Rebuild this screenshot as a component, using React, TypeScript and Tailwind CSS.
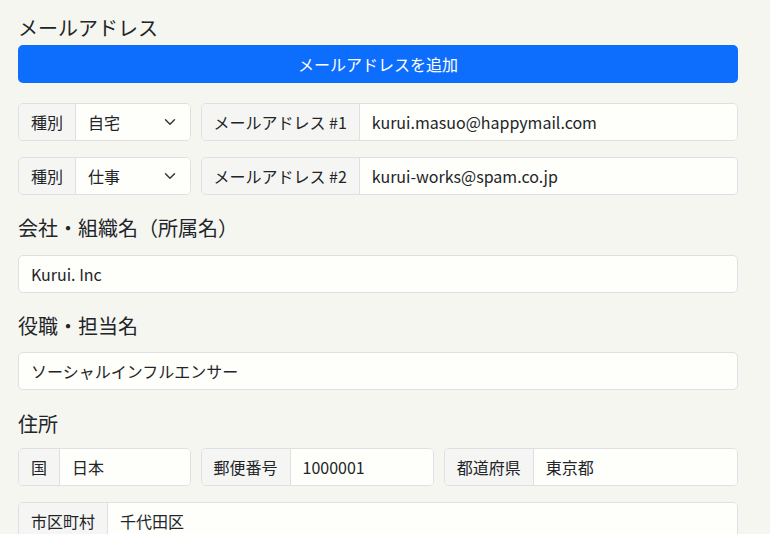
import React from "react";

const font = { fontFamily: '"Noto Sans CJK JP", "Noto Sans", sans-serif' };

function Label({ children }: { children: React.ReactNode }) {
  return (
    <span className="flex items-center px-3 bg-[#f5f5f3] border-r border-[#e0e0e4] whitespace-nowrap text-[#212529]">
      {children}
    </span>
  );
}

function Group({
  label,
  value,
  span,
  select,
}: {
  label: string;
  value: string;
  span: string;
  select?: boolean;
}) {
  return (
    <div className={`${span} flex h-[38px] rounded-[5px] border border-[#e0e0e4] overflow-hidden`}>
      <Label>{label}</Label>
      <div className="flex-1 flex items-center justify-between px-3 bg-[#fefefb] text-[#212529]">
        <span>{value}</span>
        {select && (
          <svg width="12" height="12" viewBox="0 0 16 16" className="mr-[2px]">
            <path d="M2 5l6 6 6-6" fill="none" stroke="#343a40" strokeWidth="2" strokeLinecap="round" strokeLinejoin="round" />
          </svg>
        )}
      </div>
    </div>
  );
}

function Heading({ children, className }: { children: React.ReactNode; className: string }) {
  return <h5 className={`text-[20px] leading-[24px] h-[24px] text-[#212529] ${className}`}>{children}</h5>;
}

export default function App() {
  return (
    <div className="w-[770px] h-[534px] overflow-hidden bg-[#f6f6f0] text-[16px]" style={font}>
      <div className="px-[18px] pt-4 w-[756px]">
        <Heading className="mb-[5px]">メールアドレス</Heading>
        <button className="w-full h-[38px] rounded-[5px] bg-[#0d6efd] text-white text-[16px] mb-5">
          メールアドレスを追加
        </button>

        <div className="grid grid-cols-12 gap-x-[10px] mb-[16px]">
          <Group span="col-span-3" label="種別" value="自宅" select />
          <Group span="col-span-9" label="メールアドレス #1" value="kurui.masuo@happymail.com" />
        </div>
        <div className="grid grid-cols-12 gap-x-[10px]">
          <Group span="col-span-3" label="種別" value="仕事" select />
          <Group span="col-span-9" label="メールアドレス #2" value="kurui-works@spam.co.jp" />
        </div>

        <Heading className="mt-[21px] mb-[15px]">会社・組織名（所属名）</Heading>
        <div className="h-[38px] flex items-center px-3 rounded-[5px] border border-[#e0e0e4] bg-[#fefefb] text-[#212529]">
          Kurui. Inc
        </div>

        <Heading className="mt-[21px] mb-[14px]">役職・担当名</Heading>
        <div className="h-[38px] flex items-center px-3 rounded-[5px] border border-[#e0e0e4] bg-[#fefefb] text-[#212529]">
          ソーシャルインフルエンサー
        </div>

        <Heading className="mt-[22px] mb-[12px]">住所</Heading>
        <div className="grid grid-cols-12 gap-x-[10px] mb-4">
          <Group span="col-span-3" label="国" value="日本" />
          <Group span="col-span-4" label="郵便番号" value="1000001" />
          <Group span="col-span-5" label="都道府県" value="東京都" />
        </div>
        <div className="grid grid-cols-12 gap-x-[10px]">
          <Group span="col-span-12" label="市区町村" value="千代田区" />
        </div>
      </div>
    </div>
  );
}
